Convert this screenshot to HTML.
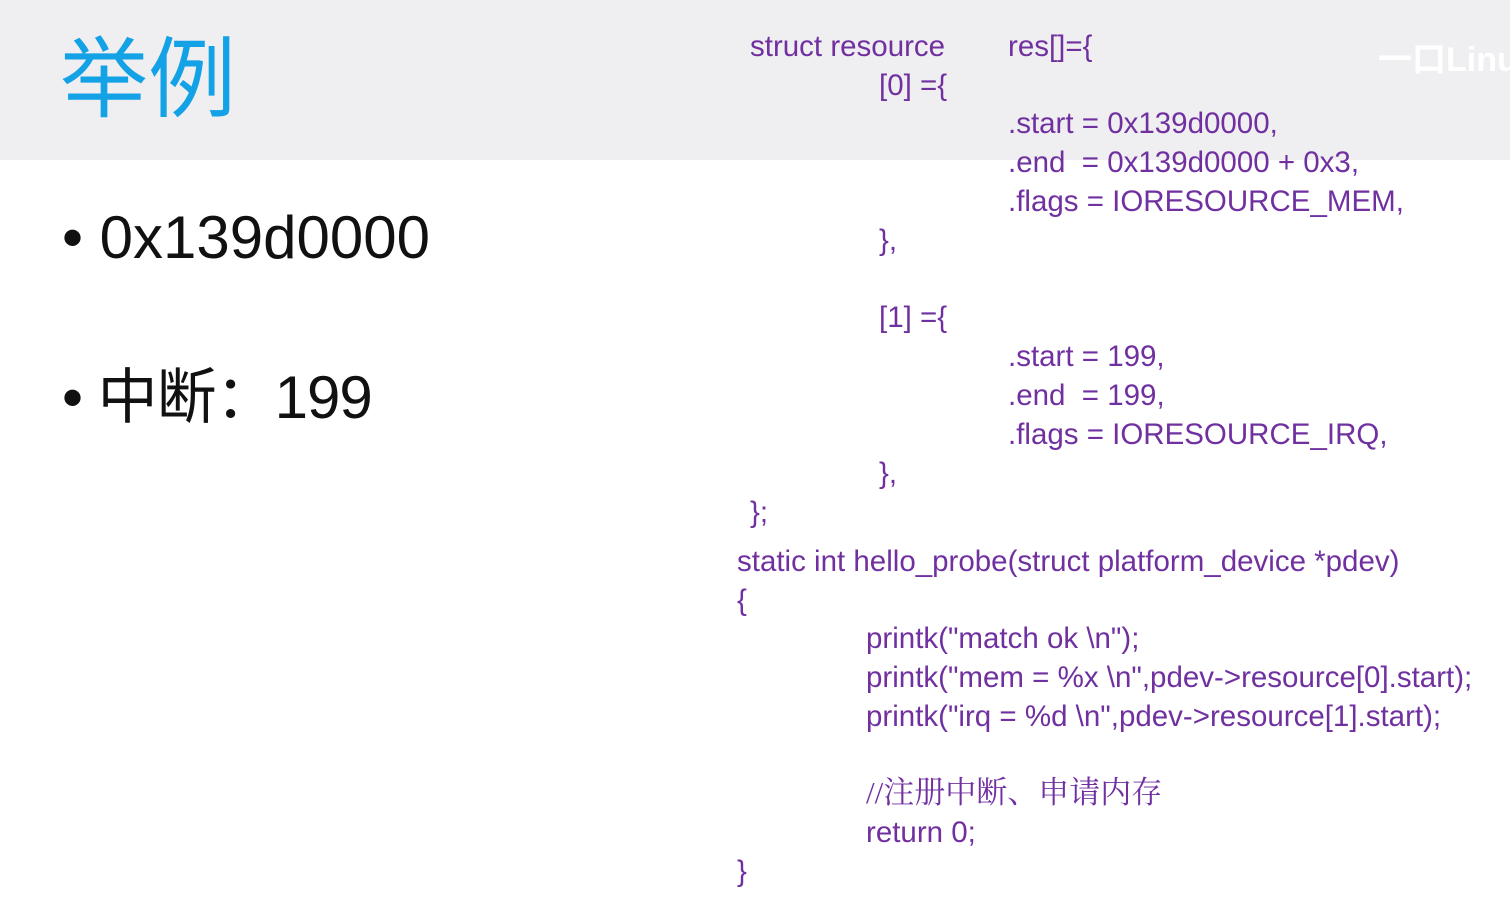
<!DOCTYPE html>
<html><head><meta charset="utf-8"><style>
body{margin:0;width:1510px;height:902px;overflow:hidden;background:#fff;position:relative;font-family:"Liberation Sans","Noto Sans CJK SC",sans-serif}
.hd{position:absolute;left:0;top:0;width:1510px;height:160px;background:#efeef1}
.t{position:absolute;left:60px;top:18px;font-size:88px;color:#13a2e6;line-height:110px;font-family:"Noto Sans CJK SC",sans-serif}
.b{position:absolute;left:62px;color:#111;font-size:60px;line-height:70px;white-space:nowrap}
.c{position:absolute;color:#7030a0;font-size:29.5px;line-height:30px;white-space:nowrap;margin-top:1px}
.wm{position:absolute;left:1378px;top:40px;font-size:34px;font-weight:bold;color:#fff;line-height:40px;white-space:nowrap}
</style></head><body>
<div class="hd"></div>
<div class="t">举例</div>
<div class="wm">一口Linux</div>
<div class="b" style="top:203px;letter-spacing:0px">• 0x139d0000</div>
<div class="b" style="top:363px;letter-spacing:-1px">• 中断：199</div>
<div class="c" style="left:750px;top:31px">struct resource</div>
<div class="c" style="left:1008px;top:31px">res[]={</div>
<div class="c" style="left:879px;top:70px">[0] ={</div>
<div class="c" style="left:1008px;top:108px">.start = 0x139d0000,</div>
<div class="c" style="left:1008px;top:147px">.end &nbsp;= 0x139d0000 + 0x3,</div>
<div class="c" style="left:1008px;top:186px">.flags = IORESOURCE_MEM,</div>
<div class="c" style="left:879px;top:225px">},</div>
<div class="c" style="left:879px;top:302px">[1] ={</div>
<div class="c" style="left:1008px;top:341px">.start = 199,</div>
<div class="c" style="left:1008px;top:380px">.end &nbsp;= 199,</div>
<div class="c" style="left:1008px;top:419px">.flags = IORESOURCE_IRQ,</div>
<div class="c" style="left:879px;top:458px">},</div>
<div class="c" style="left:750px;top:497px">};</div>
<div class="c" style="left:737px;top:546px">static int hello_probe(struct platform_device *pdev)</div>
<div class="c" style="left:737px;top:585px">{</div>
<div class="c" style="left:866px;top:623px">printk("match ok \n");</div>
<div class="c" style="left:866px;top:662px">printk("mem = %x \n",pdev-&gt;resource[0].start);</div>
<div class="c" style="left:866px;top:701px">printk("irq = %d \n",pdev-&gt;resource[1].start);</div>
<div class="c" style="left:866px;top:777px;font-family:'Liberation Serif','Noto Serif CJK SC',serif;font-size:31px">//注册中断、申请内存</div>
<div class="c" style="left:866px;top:817px">return 0;</div>
<div class="c" style="left:737px;top:856px">}</div>
</body></html>
